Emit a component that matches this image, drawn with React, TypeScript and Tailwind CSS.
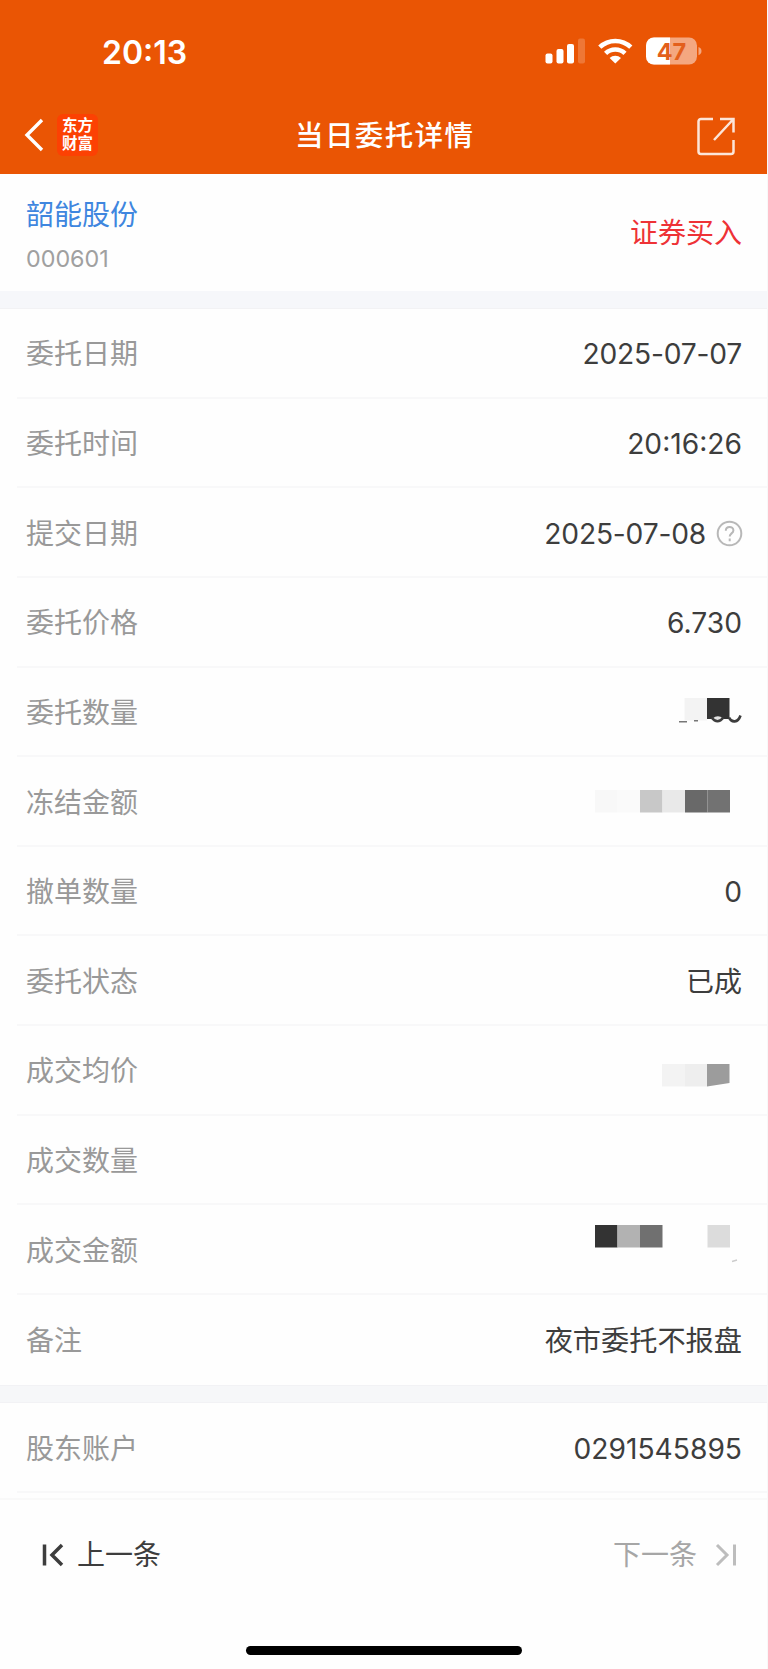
import React from 'react';

interface RowProps {
  label: string;
  children?: React.ReactNode;
  last?: boolean;
}

interface Block {
  x: number;
  fill: string;
}

const CELL = 22.5;

// Pixelated strip that hides a private amount
const Mosaic: React.FC<{ blocks: Block[]; children?: React.ReactNode; className: string }> = ({ blocks, children, className }) => (
  <svg className={className} width="170" height="50" viewBox="0 0 170 50">
    {blocks.map(b => (
      <rect key={b.x} x={b.x} y="10" width={CELL} height={CELL} fill={b.fill} />
    ))}
    {children}
  </svg>
);

const Row: React.FC<RowProps> = ({ label, children, last }) => (
  <div className="h-[89.65px] pl-[17px]">
    <div className={`flex h-full items-center justify-between pl-[9px] pr-[25px] ${last ? '' : 'border-b-2 border-[#f8f8f9]'}`}>
      <span className="pt-[3px] text-[28px] leading-10 text-[#999999]">{label}</span>
      <span className="flex items-center pt-[3px] text-[28.2px] leading-10 text-[#3d3d3d]">{children}</span>
    </div>
  </div>
);

const StatusIcons = () => (
  <svg className="absolute left-[544px] top-[34px]" width="160" height="34" viewBox="544 34 160 34">
    <g fill="#fff">
      <rect x="545.5" y="53.5" width="7" height="10" rx="2" />
      <rect x="556.5" y="49" width="7" height="14.5" rx="2" />
      <rect x="567" y="44" width="7" height="19.5" rx="2" />
      <rect x="578" y="38.5" width="7" height="25" rx="2" opacity="0.2" />
    </g>
    <g fill="none" stroke="#fff" strokeWidth="4.6">
      <path d="M599.8 47.2a22.5 22.5 0 0 1 31 0" />
      <path d="M605.6 53.400a14 14 0 0 1 19.4 0" />
    </g>
    <path d="M615.300 63.400l-5.700-5.300a8 8 0 0 1 11.400 0z" fill="#fff" />
    <rect x="646" y="37.5" width="51" height="27" rx="8" fill="#f4a780" />
    <path d="M670 37.5H654a8 8 0 0 0-8 8v11a8 8 0 0 0 8 8h16z" fill="#fff" />
    <path d="M698.5 47c4 1.2 4 7 0 8.2z" fill="#f4a780" />
    <text x="671.5" y="59.5" textAnchor="middle" fontFamily="Inter, sans-serif" fontSize="23.5" fontWeight="700" fill="#e35f1c">47</text>
  </svg>
);

const Header = () => (
  <header className="relative h-[174px] bg-[#ea5504] text-white">
    <span className="absolute left-[102px] top-[33px] text-[32px] font-semibold leading-10">20:13</span>
    <StatusIcons />
    <div className="flex h-full items-end justify-between pl-[24px] pr-[32px]">
      <div className="mb-[18px] flex items-center">
        <svg width="20" height="34" viewBox="0 0 20 34" fill="none" stroke="#fff" strokeWidth="3.4">
          <path d="M18 2L3 17l15 15" />
        </svg>
        <div className="ml-[13px] flex h-[42px] w-[41px] flex-col items-center justify-center rounded-md bg-[#fc4103] text-[15.5px] font-bold leading-[18px]">
          <span>东方</span>
          <span>财富</span>
        </div>
      </div>
      <svg className="mb-[17px]" width="40" height="40" viewBox="0 0 40 40" fill="none" stroke="#fff" strokeOpacity="0.85" strokeWidth="2.5">
        <path d="M17 2H5a2.500 2.500 0 0 0-2.500 2.500v30a2.500 2.500 0 0 0 2.500 2.500h30a2.500 2.500 0 0 0 2.500-2.500V23M24 2h13.500V15.500M37.500 2L18 23" />
      </svg>
    </div>
    <h1 className="absolute left-[295px] top-[116px] whitespace-nowrap text-[28.5px] font-medium leading-10 tracking-[1.4px]">当日委托详情</h1>
  </header>
);

const App: React.FC = () => (
  <div className="h-[1669px] w-[768px] overflow-hidden border-r border-[#f8f8f8] bg-[#fefefe] font-[Inter,'Noto_Sans_CJK_SC',sans-serif]">
    <div className="-mr-px">
      <Header />
    </div>

    <section className="flex h-[116.5px] items-center justify-between pl-[26px] pr-[25px]">
      <div className="flex flex-col pt-[10px]">
        <span className="text-[28px] leading-10 text-[#3f86df]">韶能股份</span>
        <span className="mt-1 text-[23.3px] leading-10 text-[#a0a0a0]">000601</span>
      </div>
      <span className="pt-[2px] text-[28px] leading-10 text-[#ee3236]">证券买入</span>
    </section>

    <div className="h-[18.5px] border-b border-[#f2f2f4] bg-[#f6f7fa]" />

    <Row label="委托日期"><span className="tracking-[-0.2px]">2025-07-07</span></Row>
    <Row label="委托时间">20:16:26</Row>
    <Row label="提交日期">
      <span className="tracking-[-0.2px]">2025-07-08</span>
      <svg className="-mr-px ml-[10px]" width="27" height="27" viewBox="0 0 27 27" fill="none" stroke="#b8b8b8" strokeWidth="2">
        <circle cx="13.5" cy="13.5" r="11.8" />
        <path d="M9.800 10.800c0-5 7.600-5 7.600-.4 0 3-3.700 3-3.700 6.100M13.700 18.600v2.600" />
      </svg>
    </Row>
    <Row label="委托价格">6.730</Row>
    <Row label="委托数量">
      <Mosaic className="-mr-[9px] mt-[1px]" blocks={[{ x: 103.5, fill: '#f3f3f3' }, { x: 126, fill: '#333333' }]}>
        <rect x="126" y="31" width="24" height="3" fill="#fefefe" />
        <path d="M98 33.800h8M113 32.800h4" stroke="#777777" strokeWidth="1.500" />
        <path d="M131.500 30.500q5.500-4.500 10.500 0-5 4-10.500 0z" fill="#e4e4e4" />
        <path d="M130.500 29.500q6 7.500 12 0M148 29.500c2.500 5.500 9 5.500 11.500-2" fill="none" stroke="#3d3d3d" strokeWidth="2.6" />
      </Mosaic>
    </Row>
    <Row label="冻结金额">
      <Mosaic
        className="-mr-[9px] mt-[5px]"
        blocks={[
          { x: 14, fill: '#f8f8f8' },
          { x: 36.5, fill: '#fafafa' },
          { x: 59, fill: '#c8c8c8' },
          { x: 81.5, fill: '#e9e9e9' },
          { x: 104, fill: '#696969' },
          { x: 126.5, fill: '#727272' },
        ]}
      />
    </Row>
    <Row label="撤单数量">0</Row>
    <Row label="委托状态"><span className="text-[28px]">已成</span></Row>
    <Row label="成交均价">
      <Mosaic className="-mr-[9px] mt-[16px]" blocks={[{ x: 81, fill: '#f3f3f3' }, { x: 103.5, fill: '#eeeeee' }]}>
        <path d="M126 10h22.500v19L126 32.500z" fill="#9c9c9c" />
      </Mosaic>
    </Row>
    <Row label="成交数量" />
    <Row label="成交金额">
      <Mosaic
        className="-mr-[9px] mb-[21px]"
        blocks={[
          { x: 14, fill: '#333333' },
          { x: 36.5, fill: '#b2b2b2' },
          { x: 59, fill: '#707070' },
          { x: 126.5, fill: '#dcdcdc' },
        ]}
      >
        <path d="M151 46.500l5-1.500" stroke="#cccccc" strokeWidth="1.500" />
      </Mosaic>
    </Row>
    <Row label="备注" last><span className="text-[28.2px]">夜市委托不报盘</span></Row>

    <div className="h-[18.5px] border-y border-[#f2f2f5] bg-[#f6f7f9]" />

    <Row label="股东账户">0291545895</Row>
    <footer className="mt-[5px] border-t-2 border-[#f9f9f9]">
      <div className="flex h-[110px] items-center justify-between pl-[41px] pr-[29px] text-[28px] leading-10">
        <span className="flex items-center gap-[13px] text-[#3d3d3d]">
          <svg width="23" height="24" viewBox="0 0 23 24" fill="none" stroke="currentColor" strokeWidth="3.5">
            <path d="M3.500 1.500v21M21 2L11 12l10 10" />
          </svg>
          上一条
        </span>
        <span className="flex items-center gap-[18px] text-[#a6a6a6]">
          下一条
          <svg width="23" height="24" viewBox="0 0 23 24" fill="none" stroke="#bdbdbd" strokeWidth="3">
            <path d="M2 2l10 10L2 22M19.500 1.500v21" />
          </svg>
        </span>
      </div>
      <div className="mx-auto mt-[36px] h-[9px] w-[276px] rounded-full bg-black" />
    </footer>
  </div>
);

export default App;
